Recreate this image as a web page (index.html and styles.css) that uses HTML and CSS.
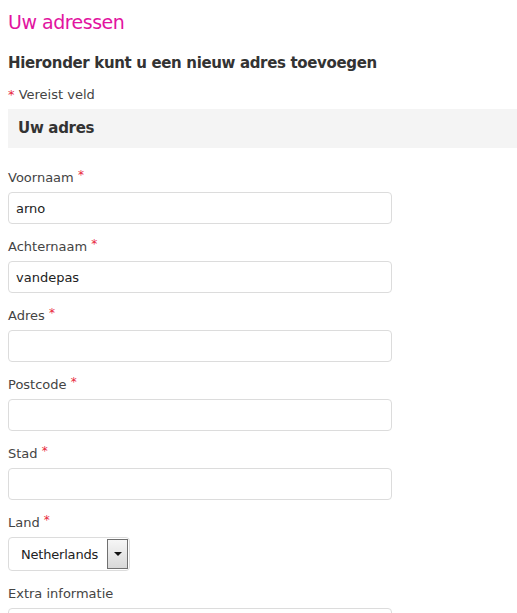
FILE: index.html
```html
<!DOCTYPE html>
<html lang="nl">
<head>
<meta charset="utf-8">
<title>Uw adressen</title>
<link rel="stylesheet" href="styles.css">
</head>
<body>
<div class="page">
  <h1 class="title">Uw adressen</h1>
  <h2 class="subtitle">Hieronder kunt u een nieuw adres toevoegen</h2>
  <p class="required-note"><span class="req">*</span> Vereist veld</p>
  <div class="section-head">Uw adres</div>
  <form class="form">
    <div class="field">
      <label class="label">Voornaam <span class="req">*</span></label>
      <input class="input" type="text" value="arno">
    </div>
    <div class="field">
      <label class="label">Achternaam <span class="req">*</span></label>
      <input class="input" type="text" value="vandepas">
    </div>
    <div class="field">
      <label class="label">Adres <span class="req">*</span></label>
      <input class="input" type="text" value="">
    </div>
    <div class="field">
      <label class="label">Postcode <span class="req">*</span></label>
      <input class="input" type="text" value="">
    </div>
    <div class="field">
      <label class="label">Stad <span class="req">*</span></label>
      <input class="input" type="text" value="">
    </div>
    <div class="field">
      <label class="label">Land <span class="req">*</span></label>
      <div class="select">
        <span class="select-value">Netherlands</span>
        <span class="select-btn"><span class="arrow"></span></span>
      </div>
    </div>
    <div class="field">
      <label class="label">Extra informatie</label>
      <input class="input" type="text" value="">
    </div>
  </form>
</div>
</body>
</html>
```

FILE: styles.css
```css
html, body {
  margin: 0;
  padding: 0;
  background: #fff;
  overflow: hidden;
}
body {
  font-family: "DejaVu Sans", Verdana, sans-serif;
  color: #333;
}
.page {
  padding: 0 0 0 8px;
}
.title {
  margin: 0;
  padding-top: 10px;
  font-size: 19px;
  line-height: 24px;
  font-weight: normal;
  color: #e2149f;
  letter-spacing: -0.5px;
}
.subtitle {
  margin: 19px 0 0;
  font-size: 15px;
  line-height: 20px;
  font-weight: bold;
  color: #333;
  letter-spacing: -0.35px;
}
.required-note {
  margin: 13px 0 0;
  font-size: 13px;
  line-height: 18px;
  color: #444;
}
.req {
  color: #e8263c;
}
.section-head {
  margin-top: 5px;
  height: 39px;
  line-height: 39px;
  background: #f4f4f4;
  padding-left: 10px;
  font-size: 15px;
  font-weight: bold;
  color: #333;
  letter-spacing: -0.3px;
}
.form {
  margin-top: 20px;
}
.field {
  margin-bottom: 13px;
}
.label {
  display: block;
  height: 20px;
  font-size: 13px;
  line-height: 20px;
  color: #444;
  margin-bottom: 4px;
}
.label .req {
  font-size: 12px;
  line-height: 0;
  position: relative;
  top: -3px;
}
.input {
  display: block;
  box-sizing: border-box;
  width: 384px;
  height: 32px;
  margin: 0;
  border: 1px solid #dcdcdc;
  border-radius: 4px;
  padding: 0 7px;
  font-family: "DejaVu Sans", Verdana, sans-serif;
  font-size: 13px;
  color: #222;
  outline: none;
  background: #fff;
}
.select {
  box-sizing: border-box;
  display: flex;
  align-items: center;
  width: 122px;
  height: 34px;
  border: 1px solid #dcdcdc;
  border-radius: 4px;
  padding: 0 1px 0 12px;
  background: #fff;
}
.select-value {
  flex: 1;
  font-size: 13px;
  color: #222;
  letter-spacing: -0.2px;
}
.select-btn {
  box-sizing: border-box;
  width: 21px;
  height: 30px;
  border: 1px solid #707070;
  background: linear-gradient(to bottom, #f6f6f6, #d8d8d8);
  display: flex;
  align-items: center;
  justify-content: center;
}
.arrow {
  width: 0;
  height: 0;
  border-left: 4px solid transparent;
  border-right: 4px solid transparent;
  border-top: 4px solid #111;
}
```
